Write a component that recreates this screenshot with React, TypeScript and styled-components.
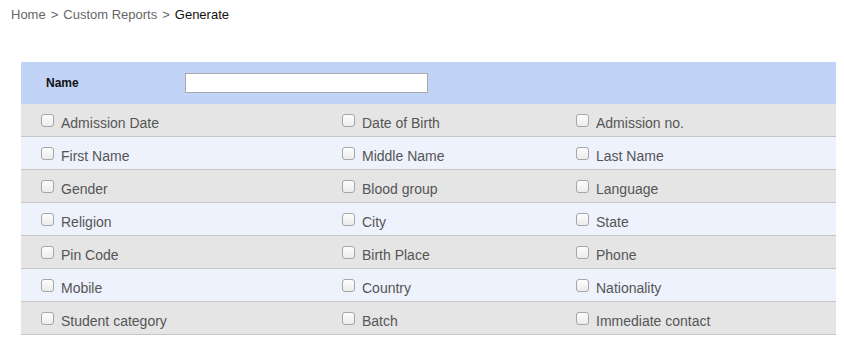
import React from "react";
import styled, { createGlobalStyle } from "styled-components";

const Global = createGlobalStyle`
  html, body { margin: 0; padding: 0; background: #fff; }
  body { font-family: "Liberation Sans", Arial, sans-serif; }
`;

const Page = styled.div`
  padding: 7px 21px 0 11px;
`;

const Crumbs = styled.div`
  font-size: 13px;
  line-height: 15px;
  color: #666;
  display: flex;
  gap: 5px;
`;

const Crumb = styled.span<{ $current?: boolean }>`
  color: ${(p) => (p.$current ? "#111" : "#666")};
`;

const Table = styled.div`
  margin: 40px 0 0 10px;
  width: 815px;
`;

const HeaderRow = styled.div`
  background: #c2d3f8;
  height: 42px;
  display: flex;
  align-items: center;
  padding-left: 25px;
`;

const Label = styled.label`
  font-size: 12px;
  font-weight: bold;
  color: #111;
  width: 139px;
`;

const TextInput = styled.input`
  box-sizing: border-box;
  width: 243px;
  height: 20px;
  border: 1px solid #a9a9a9;
  background: #fff;
  margin: 0;
  padding: 0 4px;
  outline: none;
`;

const Row = styled.div<{ $alt: boolean }>`
  display: grid;
  grid-template-columns: 301px 234px 1fr;
  height: 32px;
  padding-left: 20px;
  background: ${(p) => (p.$alt ? "#edf2fd" : "#e5e5e5")};
  border-bottom: 1px solid #c6c6c6;
`;

const Cell = styled.label`
  display: flex;
  align-items: center;
  padding-top: 6px;
  font-size: 14px;
  color: #555;
`;

const Check = styled.input`
  appearance: none;
  -webkit-appearance: none;
  box-sizing: border-box;
  width: 13px;
  height: 13px;
  margin: -5px 7px 0 0;
  border: 1px solid #a6a6a6;
  border-radius: 3px;
  background: linear-gradient(#fdfdfd, #ececec);
  flex: none;
`;

const fields = [
  ["Admission Date", "Date of Birth", "Admission no."],
  ["First Name", "Middle Name", "Last Name"],
  ["Gender", "Blood group", "Language"],
  ["Religion", "City", "State"],
  ["Pin Code", "Birth Place", "Phone"],
  ["Mobile", "Country", "Nationality"],
  ["Student category", "Batch", "Immediate contact"],
];

export default function App() {
  return (
    <Page>
      <Global />
      <Crumbs>
        <Crumb>Home</Crumb>
        <Crumb>&gt;</Crumb>
        <Crumb>Custom Reports</Crumb>
        <Crumb>&gt;</Crumb>
        <Crumb $current>Generate</Crumb>
      </Crumbs>
      <Table>
        <HeaderRow>
          <Label>Name</Label>
          <TextInput type="text" />
        </HeaderRow>
        {fields.map((row, i) => (
          <Row key={i} $alt={i % 2 === 1}>
            {row.map((f) => (
              <Cell key={f}>
                <Check type="checkbox" />
                {f}
              </Cell>
            ))}
          </Row>
        ))}
      </Table>
    </Page>
  );
}
